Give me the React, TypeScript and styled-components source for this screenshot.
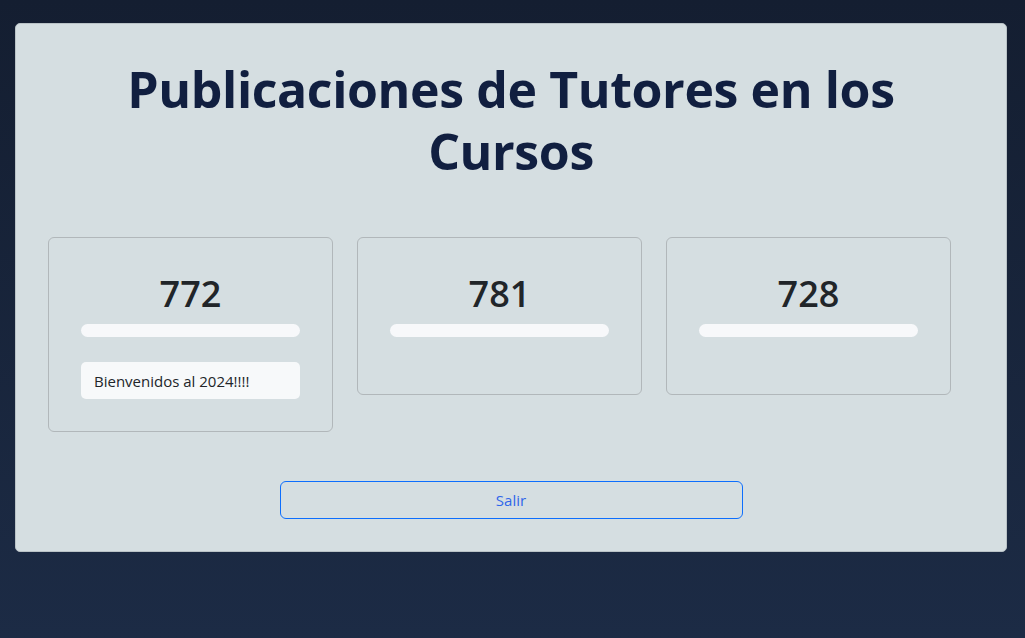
import styled, { createGlobalStyle } from "styled-components"

const GlobalStyle = createGlobalStyle`
    html, body {
        margin: 0;
        padding: 0;
    }
    body {
        min-height: 100vh;
        background: linear-gradient(180deg, #141e31 0%, #1c2b45 100%);
        font-family: "Open Sans", "Noto Sans", sans-serif;
    }
`

const Page = styled.div`
    padding: 23px 18px 0 15px;
`

const Panel = styled.div`
    background-color: #d5dee1;
    border: 1px solid #b9c2c6;
    border-radius: 5px;
    padding: 34px 32px 32px;
    display: flex;
    flex-direction: column;
`

const Title = styled.h1`
    margin: 0 0 55px;
    text-align: center;
    font-size: 50px;
    line-height: 62px;
    font-weight: 700;
    color: #111f40;
    letter-spacing: -0.4px;
`

const CardRow = styled.div`
    display: flex;
    align-items: flex-start;
    gap: 24px;
`

const StatCard = styled.div`
    width: 285px;
    box-sizing: border-box;
    border: 1px solid #b1b7ba;
    border-radius: 6px;
    padding: 32px;
    display: flex;
    flex-direction: column;
`

const StatNumber = styled.div`
    text-align: center;
    font-size: 36px;
    line-height: 48px;
    font-weight: 600;
    color: #212529;
    margin-bottom: 6px;
`

const Progress = styled.div`
    height: 13px;
    flex-shrink: 0;
    border-radius: 7px;
    background-color: #f7f8fa;
    margin-bottom: 25px;
`

const Note = styled.div`
    background-color: #f7f9fa;
    border-radius: 5px;
    padding: 0 13px;
    height: 37px;
    display: flex;
    align-items: center;
    font-size: 15px;
    color: #212529;
`

const ExitButton = styled.button`
    align-self: center;
    width: 463px;
    height: 38px;
    margin-top: 49px;
    border: 1px solid #0d6efd;
    border-radius: 6px;
    background: transparent;
    color: #2f66ea;
    font-family: inherit;
    font-size: 15px;
    cursor: pointer;
`

const stats = [
    { id: 1, total: 772, note: "Bienvenidos al 2024!!!!" },
    { id: 2, total: 781 },
    { id: 3, total: 728 },
]

export default function App() {
    return (
        <>
            <GlobalStyle />
            <Page>
                <Panel>
                    <Title>Publicaciones de Tutores en los<br />Cursos</Title>
                    <CardRow>
                        {stats.map(s => (
                            <StatCard key={s.id}>
                                <StatNumber>{s.total}</StatNumber>
                                <Progress />
                                {s.note && <Note>{s.note}</Note>}
                            </StatCard>
                        ))}
                    </CardRow>
                    <ExitButton>Salir</ExitButton>
                </Panel>
            </Page>
        </>
    )
}
